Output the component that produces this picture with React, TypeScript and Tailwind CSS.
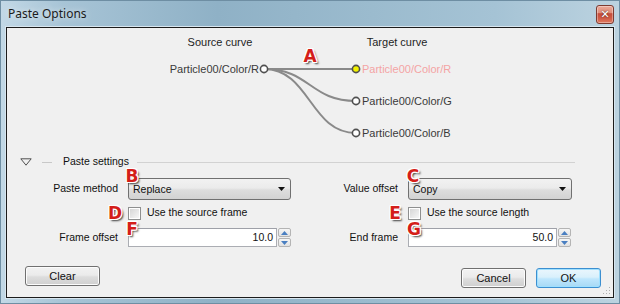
import React from 'react';

// callout letters drawn over the dialog (A..G)
const badges = [
  { ch: 'A', x: 309, y: 55 },
  { ch: 'B', x: 131, y: 175 },
  { ch: 'C', x: 412, y: 175 },
  { ch: 'D', x: 114, y: 212 },
  { ch: 'E', x: 394, y: 212 },
  { ch: 'F', x: 131, y: 228 },
  { ch: 'G', x: 413, y: 228 },
];

const Badge: React.FC<{ ch: string; x: number; y: number }> = ({ ch, x, y }) => (
  <div
    className="absolute w-[18px] h-[14px] flex items-center justify-center text-[17px] leading-none font-bold text-[#d41e1a] font-['DejaVu_Sans',sans-serif] [text-shadow:-1px_-1px_0_#fff,1px_-1px_0_#fff,-1px_1px_0_#fff,1px_1px_0_#fff,0_-1px_0_#fff,0_1px_0_#fff,-1px_0_0_#fff,1px_0_0_#fff,2px_2px_2px_rgba(0,0,0,0.75)]"
    style={{ left: x - 9, top: y - 7 }}
  >
    {ch}
  </div>
);

const Select: React.FC<{ value: string; width: string }> = ({ value, width }) => (
  <div
    className={`${width} h-[22px] rounded-[3px] border border-[#707070] bg-[linear-gradient(#f2f2f2,#ebebeb_45%,#dddddd_55%,#d2d2d2)] flex items-center justify-between pl-[4px] pr-[5px]`}
  >
    <span className="text-[#111] pt-[2px]">{value}</span>
    <svg width="7" height="4" viewBox="0 0 7 4">
      <path d="M0 0H7L3.5 4Z" fill="#111" />
    </svg>
  </div>
);

const Checkbox: React.FC<{ label: string }> = ({ label }) => (
  <div className="flex items-center gap-[6px]">
    <div className="w-[13px] h-[13px] border border-[#8e8f8f] bg-white p-[1px]">
      <div className="w-full h-full bg-[linear-gradient(135deg,#d6d6d6,#f6f6f6)]" />
    </div>
    <span className="text-[#111]">{label}</span>
  </div>
);

const SpinInput: React.FC<{ value: string; inputW: string }> = ({ value, inputW }) => (
  <div className="flex h-[19px]">
    <div
      className={`${inputW} h-full border border-[#abadb3] border-t-[#9ea0a8] bg-white text-right pr-[3px] leading-[17px] text-[#111]`}
    >
      {value}
    </div>
    <div className="w-[14px] h-full flex flex-col gap-[1px] pl-[1px]">
      <div className="flex-1 border border-[#b4b4b4] rounded-[2px] bg-[linear-gradient(#f6f6f6,#e2e2e2)] flex items-center justify-center">
        <svg width="7" height="4" viewBox="0 0 7 4">
          <path d="M0 4L3.5 0L7 4Z" fill="#4a7fc1" />
        </svg>
      </div>
      <div className="flex-1 border border-[#b4b4b4] rounded-[2px] bg-[linear-gradient(#f6f6f6,#e2e2e2)] flex items-center justify-center">
        <svg width="7" height="4" viewBox="0 0 7 4">
          <path d="M0 0H7L3.5 4Z" fill="#4a7fc1" />
        </svg>
      </div>
    </div>
  </div>
);

const Button: React.FC<{ label: string; width: string; focused?: boolean }> = ({ label, width, focused }) => (
  <div
    className={`${width} h-[20px] rounded-[3px] border flex items-center justify-center text-[11px] text-[#111] ${
      focused
        ? 'border-[#3c8fd0] bg-[linear-gradient(#eaf6fd,#d9f0fc_45%,#bee6fd_55%,#a7d9f5)] shadow-[inset_0_0_0_1px_#9fe0ff]'
        : 'border-[#707070] bg-[linear-gradient(#f2f2f2,#ebebeb_45%,#dddddd_55%,#cfcfcf)] shadow-[inset_0_0_0_1px_#fcfcfc]'
    }`}
  >
    {label}
  </div>
);

const CurveDiagram: React.FC = () => {
  const src = { x: 257, y: 41 };
  const targets = [
    { y: 41, label: 'Particle00/Color/R', active: true },
    { y: 73, label: 'Particle00/Color/G', active: false },
    { y: 105, label: 'Particle00/Color/B', active: false },
  ];
  const tx = 349;
  return (
    <svg width="606" height="122" viewBox="0 0 606 122" className="block font-['Liberation_Sans',Arial,sans-serif]">
      <text x="213" y="18" fontSize="11" textAnchor="middle" fill="#1e1e1e">Source curve</text>
      <text x="390" y="18" fontSize="11" textAnchor="middle" fill="#1e1e1e">Target curve</text>
      {targets.map((t) => (
        <path
          key={t.label}
          d={`M${src.x} ${src.y} C${src.x + 46} ${src.y} ${tx - 46} ${t.y} ${tx} ${t.y}`}
          stroke="#8a8a8a"
          strokeWidth="2"
          fill="none"
        />
      ))}
      <text x="252" y="45" fontSize="11" textAnchor="end" fill="#3a3a3a">Particle00/Color/R</text>
      <circle cx={src.x} cy={src.y} r="3.6" fill="#fff" stroke="#505050" strokeWidth="1.6" />
      {targets.map((t) => (
        <g key={t.label + 'n'}>
          <circle cx={tx} cy={t.y} r="3.6" fill={t.active ? '#f2f200' : '#fff'} stroke="#505050" strokeWidth="1.6" />
          <text x="355" y={t.y + 4} fontSize="11" fill={t.active ? '#f4a4a4' : '#3a3a3a'}>
            {t.label}
          </text>
        </g>
      ))}
    </svg>
  );
};

export default function App() {
  return (
    <div className="relative w-[620px] h-[304px] flex flex-col border border-[#6e8ea3] bg-[linear-gradient(90deg,#c2d8e6_0%,#a7c4d6_10%,#8fb1c6_35%,#9bbbce_60%,#a5c3d5_80%,#bcd3e0_100%)] font-['Liberation_Sans',Arial,sans-serif] text-[10.5px] overflow-hidden">
      {/* title bar */}
      <div className="h-[26px] flex items-center justify-between pl-[7px] pr-[5px]">
        <span className="text-[12px] text-[#1b1b1b] font-['Noto_Sans',sans-serif] [text-shadow:0_0_6px_rgba(255,255,255,0.8)]">
          Paste Options
        </span>
        <div className="w-[18px] h-[19px] rounded-[3px] border border-[#7d3b31] bg-[linear-gradient(#eba897,#e08f7c_40%,#c64c3a_45%,#cf5a45_70%,#e07a60)] flex items-center justify-center shadow-[inset_0_0_0_1px_rgba(255,255,255,0.35)]">
          <span className="text-[11px] font-bold leading-none text-white font-['DejaVu_Sans',sans-serif] [text-shadow:0_0_2px_#3a1a10]">
            ✕
          </span>
        </div>
      </div>

      {/* client area */}
      <div className="relative flex-1 mx-[5px] mb-[5px] border border-[#1c1c1c] bg-[#f0f0f0] flex flex-col shadow-[0_0_0_1px_#d8e6ef]">
        <CurveDiagram />

        {/* Paste settings header */}
        <div className="h-[24px] flex items-center pl-[13px] pr-[38px]">
          <svg width="12" height="8" viewBox="0 0 12 8">
            <path d="M0.8 0.8H11.2L6 7.2Z" fill="none" stroke="#505050" strokeWidth="1" />
          </svg>
          <div className="ml-[10px] w-[10px] h-px bg-[#c8c8c8]" />
          <span className="ml-[11px] text-[#111]">Paste settings</span>
          <div className="ml-[8px] flex-1 h-px bg-[#d2d2d2]" />
        </div>

        {/* form */}
        <div className="mt-[4px] flex h-[22px] items-center">
          <div className="w-[111px] text-right text-[#111]">Paste method</div>
          <div className="ml-[10px]">
            <Select value="Replace" width="w-[163px]" />
          </div>
          <div className="w-[107px] text-right text-[#111]">Value offset</div>
          <div className="ml-[10px]">
            <Select value="Copy" width="w-[164px]" />
          </div>
        </div>

        <div className="mt-[3px] flex h-[20px] items-center">
          <div className="ml-[121px] w-[280px]">
            <Checkbox label="Use the source frame" />
          </div>
          <Checkbox label="Use the source length" />
        </div>

        <div className="mt-[5px] flex h-[19px] items-center">
          <div className="w-[111px] text-right text-[#111]">Frame offset</div>
          <div className="ml-[10px]">
            <SpinInput value="10.0" inputW="w-[149px]" />
          </div>
          <div className="w-[107px] text-right text-[#111]">End frame</div>
          <div className="ml-[10px]">
            <SpinInput value="50.0" inputW="w-[149px]" />
          </div>
        </div>

        {/* buttons */}
        <div className="mt-[19px] flex items-start pl-[18px] pr-[12px]">
          <Button label="Clear" width="w-[75px]" />
          <div className="flex-1" />
          <div className="mt-[2px] flex gap-[10px]">
            <Button label="Cancel" width="w-[65px]" />
            <Button label="OK" width="w-[65px]" focused />
          </div>
        </div>

        {/* size grip */}
        <svg className="absolute right-[2px] bottom-[2px]" width="8" height="8" viewBox="0 0 8 8">
          <rect x="6" y="0" width="1" height="1" fill="#b0b0b0" />
          <rect x="6" y="3" width="1" height="1" fill="#b0b0b0" />
          <rect x="3" y="3" width="1" height="1" fill="#b0b0b0" />
          <rect x="6" y="6" width="1" height="1" fill="#b0b0b0" />
          <rect x="3" y="6" width="1" height="1" fill="#b0b0b0" />
          <rect x="0" y="6" width="1" height="1" fill="#b0b0b0" />
        </svg>
      </div>

      {badges.map((b) => (
        <Badge key={b.ch} ch={b.ch} x={b.x} y={b.y} />
      ))}
    </div>
  );
}
